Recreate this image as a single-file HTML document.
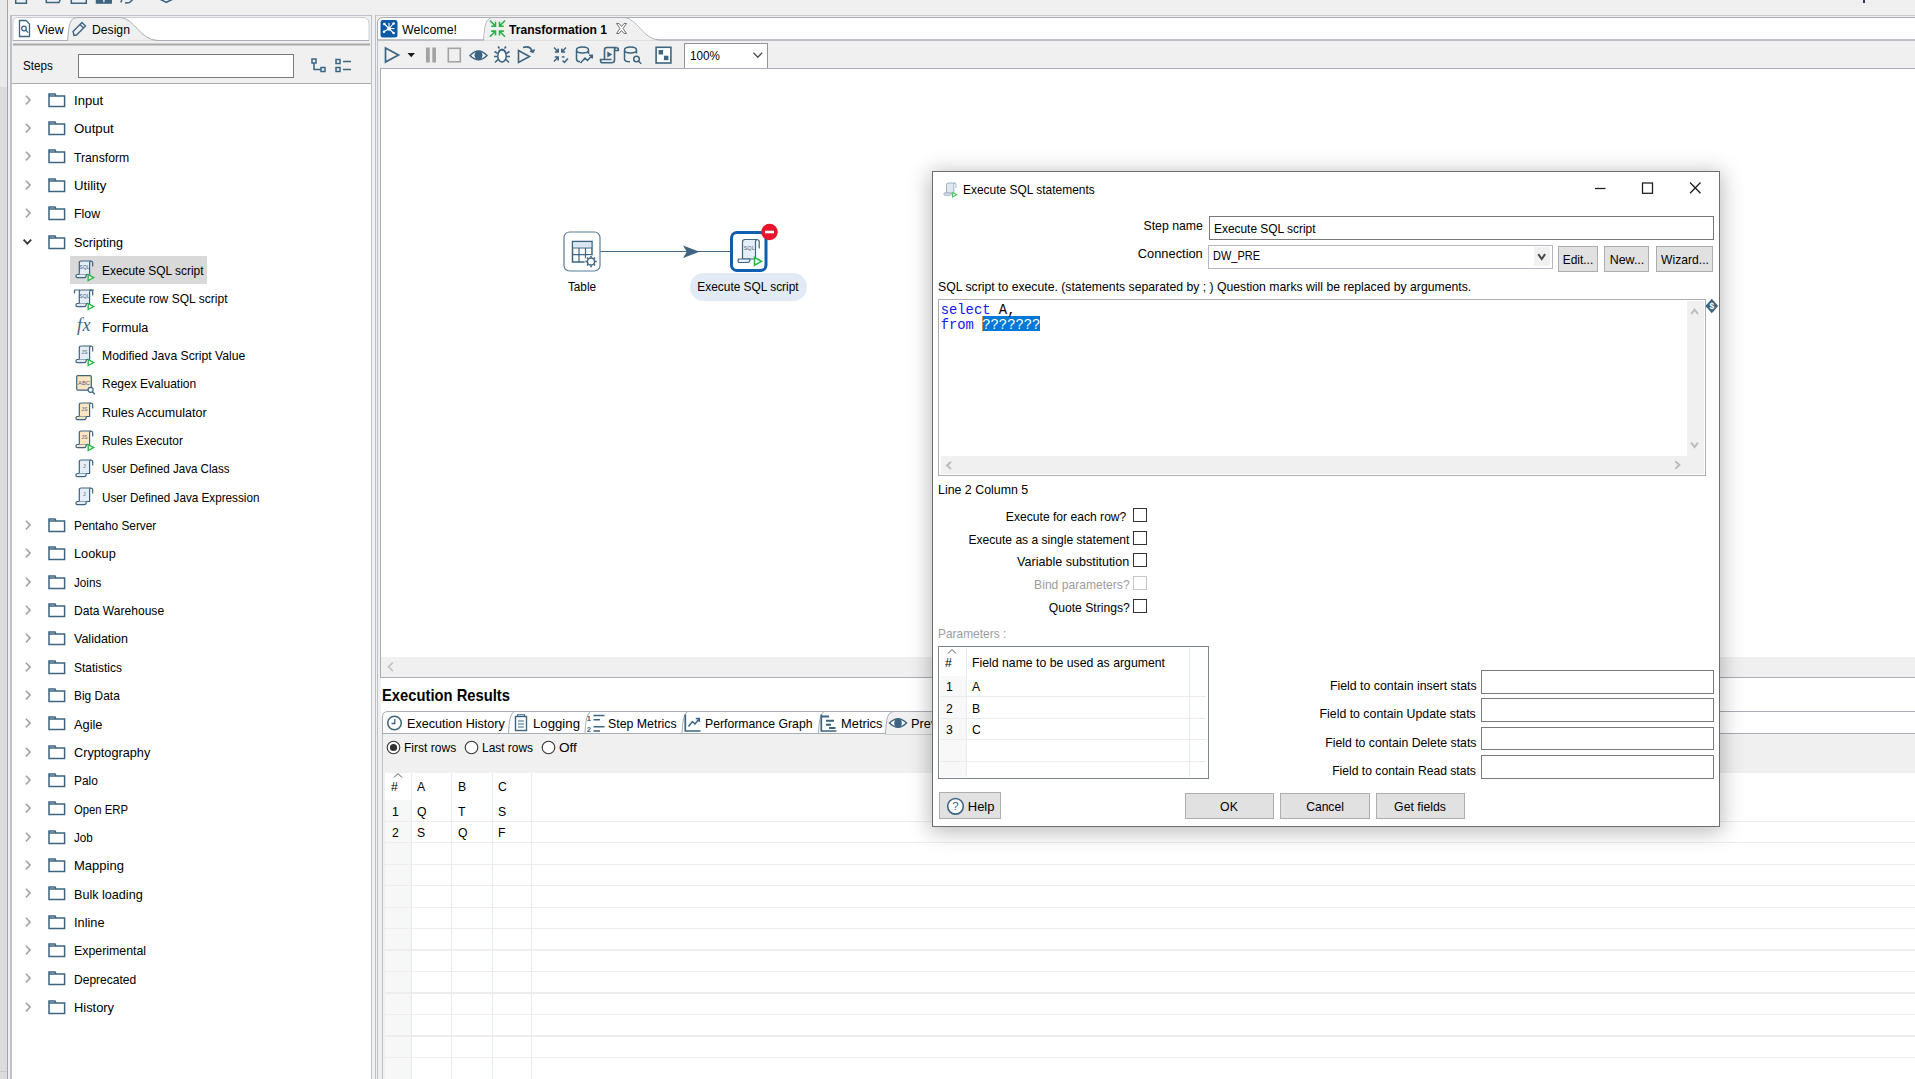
<!DOCTYPE html>
<html lang="en"><head><meta charset="utf-8"><title>Spoon - Transformation 1</title><style>
html,body{margin:0;padding:0}
body{width:1915px;height:1079px;overflow:hidden;background:#f0f0f0;position:relative;font-family:"Liberation Sans",sans-serif;color:#000}
div,span,svg{position:absolute;display:block}
svg{overflow:visible}
.t{white-space:nowrap;font-size:13px;line-height:16px;transform-origin:0 0;color:#000}
.t.r{transform-origin:100% 0}
.t.c{transform-origin:50% 0;text-align:center}
.t.b{font-weight:bold}
.t.g{color:#9d9d9d}
.mono{font-family:"Liberation Mono",monospace}
</style></head>
<body>
<div style="left:0px;top:0px;width:7px;height:87.3px;background:#e9e9e9"></div>
<div style="left:0px;top:87.3px;width:7px;height:992px;background:#dcdcdc"></div>
<div style="left:7px;top:0px;width:1.3px;height:1079px;background:#a4a4a4"></div>
<div style="left:0px;top:1071px;width:7px;height:1px;background:#c8c8c8"></div>
<svg style="left:0px;top:0px;" width="180" height="6" viewBox="0 0 180 6"><g fill="none" stroke="#3d6480" stroke-width="1.500"><path d="M15.700 -3V3.200H26.400V-3"/><path d="M46.300 -3V2.600H59L61.200 -3"/><path d="M71.300 -3V3.200H86.300V-3"/><path d="M96.500 -3V3.100H111.200V-3" fill="#3d6480"/><path d="M120.800 2.500L122.500 -2M125 3L129.500 2.600L134.800 -2.500"/><path d="M159.500 -1L166.300 2.300L173.200 -1"/></g><rect x="103.200" y="0" width="1.400" height="2.200" fill="#f0f0f0"/></svg>
<div style="left:1863px;top:0px;width:2px;height:3px;background:#33335a"></div>
<div style="left:10.3px;top:15px;width:361.5px;height:1px;background:#bcc0c8"></div>
<div style="left:10.3px;top:15px;width:1.3px;height:1064px;background:#bcc0c8"></div>
<div style="left:370.6px;top:15px;width:1.3px;height:1064px;background:#bcc0c8"></div>
<svg style="left:12px;top:16px;" width="359" height="30" viewBox="0 0 359 30"><path d="M1 24.5V6.5Q1 1.5 6 1.5H351Q357 1.5 357 7.5V24.5Z" fill="#fff" stroke="#c9ccd2"/><path d="M55.5 24.5C57 10 57 1.5 66 1.5H108C122 1.5 128 24.5 146 24.5" fill="#f0f0f0" stroke="#a9adb5"/><path d="M1 24.5H55.5M146 24.5H357" stroke="#a9adb5" fill="none"/><rect x="1" y="27.5" width="357" height="2" fill="#a8a8a8"/><g fill="none" stroke="#3d6480" stroke-width="1.3"><path d="M7.5 4.5H14L17.5 8V20.5H7.5Z"/><circle cx="12" cy="12.5" r="2.3"/><path d="M13.8 14.3L16 16.6"/></g><g fill="none" stroke="#3d6480" stroke-width="1.4"><path d="M62 19.5L61 15.5L70 6.5L73.5 10L64.5 19Z M68 8.5L71.5 12"/></g></svg>
<span class="t" style="left:37.0px;top:21.5px;transform:scaleX(0.9516);">View</span>
<span class="t" style="left:92.0px;top:21.5px;transform:scaleX(0.9365);">Design</span>
<span class="t" style="left:22.6px;top:57.5px;transform:scaleX(0.8962);">Steps</span>
<div style="left:78px;top:54px;width:214px;height:22px;background:#fff;border:1px solid #7a7a7a;box-sizing:content-box"></div>
<svg style="left:310px;top:57px;" width="44" height="18" viewBox="0 0 44 18"><g fill="none" stroke="#3d6480" stroke-width="1.5"><rect x="2" y="2" width="4" height="4"/><rect x="11" y="10.5" width="4" height="4"/><path d="M4 6V12.5H11"/><rect x="26" y="2.5" width="4" height="4"/><rect x="26" y="10.5" width="4" height="4"/><path d="M33 4.5H41M33 12.5H41"/></g></svg>
<div style="left:12px;top:83.3px;width:359px;height:1.3px;background:#adadad"></div>
<div style="left:12px;top:84px;width:359px;height:995px;background:#fff"></div>
<svg style="left:22.6px;top:93.8px;" width="10" height="12" viewBox="0 0 10 12"><path d="M2.900 1.800L7.100 6.100L2.900 10.400" fill="none" stroke="#a3a3a3" stroke-width="1.600"/></svg>
<svg style="left:47.5px;top:91.8px;" width="18" height="16" viewBox="0 0 18 16"><path d="M1 1.900H7L8 4H16.600V14.600H1Z M1 4H8" fill="none" stroke="#3d6480" stroke-width="1.5"/></svg>
<span class="t" style="left:74.1px;top:92.5px;transform:scaleX(1.0062);">Input</span>
<svg style="left:22.6px;top:122.14px;" width="10" height="12" viewBox="0 0 10 12"><path d="M2.900 1.800L7.100 6.100L2.900 10.400" fill="none" stroke="#a3a3a3" stroke-width="1.600"/></svg>
<svg style="left:47.5px;top:120.14px;" width="18" height="16" viewBox="0 0 18 16"><path d="M1 1.900H7L8 4H16.600V14.600H1Z M1 4H8" fill="none" stroke="#3d6480" stroke-width="1.5"/></svg>
<span class="t" style="left:74.1px;top:120.5px;transform:scaleX(1.0197);">Output</span>
<svg style="left:22.6px;top:150.49px;" width="10" height="12" viewBox="0 0 10 12"><path d="M2.900 1.800L7.100 6.100L2.900 10.400" fill="none" stroke="#a3a3a3" stroke-width="1.600"/></svg>
<svg style="left:47.5px;top:148.49px;" width="18" height="16" viewBox="0 0 18 16"><path d="M1 1.900H7L8 4H16.600V14.600H1Z M1 4H8" fill="none" stroke="#3d6480" stroke-width="1.5"/></svg>
<span class="t" style="left:74.1px;top:149.5px;transform:scaleX(0.9396);">Transform</span>
<svg style="left:22.6px;top:178.83px;" width="10" height="12" viewBox="0 0 10 12"><path d="M2.900 1.800L7.100 6.100L2.900 10.400" fill="none" stroke="#a3a3a3" stroke-width="1.600"/></svg>
<svg style="left:47.5px;top:176.83px;" width="18" height="16" viewBox="0 0 18 16"><path d="M1 1.900H7L8 4H16.600V14.600H1Z M1 4H8" fill="none" stroke="#3d6480" stroke-width="1.5"/></svg>
<span class="t" style="left:74.1px;top:177.5px;transform:scaleX(1.0163);">Utility</span>
<svg style="left:22.6px;top:207.18px;" width="10" height="12" viewBox="0 0 10 12"><path d="M2.900 1.800L7.100 6.100L2.900 10.400" fill="none" stroke="#a3a3a3" stroke-width="1.600"/></svg>
<svg style="left:47.5px;top:205.18px;" width="18" height="16" viewBox="0 0 18 16"><path d="M1 1.900H7L8 4H16.600V14.600H1Z M1 4H8" fill="none" stroke="#3d6480" stroke-width="1.5"/></svg>
<span class="t" style="left:74.1px;top:205.5px;transform:scaleX(0.9544);">Flow</span>
<svg style="left:21px;top:236.52px;" width="14" height="10" viewBox="0 0 14 10"><path d="M2.600 2.700L6.400 6.600L10.200 2.700" fill="none" stroke="#3a3a3a" stroke-width="1.900"/></svg>
<svg style="left:47.5px;top:233.52px;" width="18" height="16" viewBox="0 0 18 16"><path d="M1 1.900H7L8 4H16.600V14.600H1Z M1 4H8" fill="none" stroke="#3d6480" stroke-width="1.5"/></svg>
<span class="t" style="left:74.1px;top:234.5px;transform:scaleX(0.9688);">Scripting</span>
<div style="left:70px;top:256.06px;width:137px;height:27.7px;background:#d9d9d9"></div>
<svg style="left:75px;top:259.36px;" width="21" height="23" viewBox="0 0 21 23"><path d="M4.300 15.500V4Q4.300 2 6.300 2H16Q14.600 2.300 14.600 4V15.500Z" fill="#e4ecf5" stroke="#3d6480" stroke-width="1.200"/><path d="M15.500 2Q17.900 2 17.700 4.500V7.600" fill="none" stroke="#3d6480" stroke-width="1.200"/><path d="M4.300 15.500H2.300Q0.900 15.600 0.900 17Q0.900 18.600 2.500 18.600H9.500Q11.300 18.600 11.300 15.500" fill="#e4ecf5" stroke="#3d6480" stroke-width="1.200"/><text x="9.400" y="10.300" text-anchor="middle" font-size="5.200" font-family="Liberation Sans,sans-serif" fill="#3d6480">SQL</text><path d="M13.200 15.700L18.600 18.600L13.200 21.600Z" fill="#fff" stroke="#2db84a" stroke-width="1.400"/></svg>
<span class="t" style="left:101.8px;top:262.5px;transform:scaleX(0.9161);">Execute SQL script</span>
<svg style="left:75px;top:287.71px;" width="21" height="23" viewBox="0 0 21 23"><path d="M4.300 15.500V4Q4.300 2 6.300 2H16Q14.600 2.300 14.600 4V15.500Z" fill="#e4ecf5" stroke="#3d6480" stroke-width="1.200"/><path d="M15.500 2Q17.900 2 17.700 4.500V7.600" fill="none" stroke="#3d6480" stroke-width="1.200"/><path d="M4.300 15.500H2.300Q0.900 15.600 0.900 17Q0.900 18.600 2.500 18.600H9.500Q11.300 18.600 11.300 15.500" fill="#e4ecf5" stroke="#3d6480" stroke-width="1.200"/><text x="9.400" y="10.300" text-anchor="middle" font-size="5.200" font-family="Liberation Sans,sans-serif" fill="#3d6480">SQL</text><path d="M13.200 15.700L18.600 18.600L13.200 21.600Z" fill="#fff" stroke="#2db84a" stroke-width="1.400"/><path d="M-0.500 2H5M-0.500 2V5.500M15 2H19" stroke="#3d6480" stroke-width="1.200" fill="none"/></svg>
<span class="t" style="left:101.8px;top:290.5px;transform:scaleX(0.9272);">Execute row SQL script</span>
<span class="t" style="left:77px;top:316.05px;font:italic 18px 'Liberation Serif',serif;color:#3d6480;transform:none;line-height:18px;letter-spacing:.5px">fx</span>
<span class="t" style="left:101.8px;top:319.5px;transform:scaleX(0.9709);">Formula</span>
<svg style="left:75px;top:344.4px;" width="21" height="23" viewBox="0 0 21 23"><path d="M4.300 15.500V4Q4.300 2 6.300 2H16Q14.600 2.300 14.600 4V15.500Z" fill="#e4ecf5" stroke="#3d6480" stroke-width="1.200"/><path d="M15.500 2Q17.900 2 17.700 4.500V7.600" fill="none" stroke="#3d6480" stroke-width="1.200"/><path d="M4.300 15.500H2.300Q0.900 15.600 0.900 17Q0.900 18.600 2.500 18.600H9.500Q11.300 18.600 11.300 15.500" fill="#e4ecf5" stroke="#3d6480" stroke-width="1.200"/><text x="9.400" y="10.300" text-anchor="middle" font-size="5.200" font-family="Liberation Sans,sans-serif" fill="#3d6480">JS</text><path d="M13.200 15.700L18.600 18.600L13.200 21.600Z" fill="#fff" stroke="#2db84a" stroke-width="1.400"/></svg>
<span class="t" style="left:101.8px;top:347.5px;transform:scaleX(0.9375);">Modified Java Script Value</span>
<svg style="left:75px;top:373.74px;" width="22" height="22" viewBox="0 0 22 22"><rect x="1.700" y="1.600" width="14.600" height="14.600" rx="1.200" fill="#fbe6c4" stroke="#3d6480" stroke-width="1.200"/><text x="9" y="11" text-anchor="middle" font-size="5.800" font-family="Liberation Sans,sans-serif" fill="#3d6480">ABC</text><circle cx="15.600" cy="15.800" r="2.500" fill="#fff" stroke="#3d6480" stroke-width="1.200"/><path d="M17.400 17.700L19.800 20.200" stroke="#3d6480" stroke-width="1.300"/></svg>
<span class="t" style="left:101.8px;top:375.5px;transform:scaleX(0.9244);">Regex Evaluation</span>
<svg style="left:75px;top:401.08px;" width="21" height="23" viewBox="0 0 21 23"><path d="M4.300 15.500V4Q4.300 2 6.300 2H16Q14.600 2.300 14.600 4V15.500Z" fill="#fbe6c4" stroke="#3d6480" stroke-width="1.200"/><path d="M15.500 2Q17.900 2 17.700 4.500V7.600" fill="none" stroke="#3d6480" stroke-width="1.200"/><path d="M4.300 15.500H2.300Q0.900 15.600 0.900 17Q0.900 18.600 2.500 18.600H9.500Q11.300 18.600 11.300 15.500" fill="#fbe6c4" stroke="#3d6480" stroke-width="1.200"/><text x="9.400" y="10.300" text-anchor="middle" font-size="5.200" font-family="Liberation Sans,sans-serif" fill="#3d6480">JS</text></svg>
<span class="t" style="left:101.8px;top:404.5px;transform:scaleX(0.965);">Rules Accumulator</span>
<svg style="left:75px;top:429.43px;" width="21" height="23" viewBox="0 0 21 23"><path d="M4.300 15.500V4Q4.300 2 6.300 2H16Q14.600 2.300 14.600 4V15.500Z" fill="#fbe6c4" stroke="#3d6480" stroke-width="1.200"/><path d="M15.500 2Q17.900 2 17.700 4.500V7.600" fill="none" stroke="#3d6480" stroke-width="1.200"/><path d="M4.300 15.500H2.300Q0.900 15.600 0.900 17Q0.900 18.600 2.500 18.600H9.500Q11.300 18.600 11.300 15.500" fill="#fbe6c4" stroke="#3d6480" stroke-width="1.200"/><text x="9.400" y="10.300" text-anchor="middle" font-size="5.200" font-family="Liberation Sans,sans-serif" fill="#3d6480">JS</text><path d="M13.200 15.700L18.600 18.600L13.200 21.600Z" fill="#fff" stroke="#2db84a" stroke-width="1.400"/></svg>
<span class="t" style="left:101.8px;top:432.5px;transform:scaleX(0.9177);">Rules Executor</span>
<svg style="left:75px;top:457.77px;" width="21" height="23" viewBox="0 0 21 23"><path d="M4.300 15.500V4Q4.300 2 6.300 2H16Q14.600 2.300 14.600 4V15.500Z" fill="#e4ecf5" stroke="#3d6480" stroke-width="1.200"/><path d="M15.500 2Q17.900 2 17.700 4.500V7.600" fill="none" stroke="#3d6480" stroke-width="1.200"/><path d="M4.300 15.500H2.300Q0.900 15.600 0.900 17Q0.900 18.600 2.500 18.600H9.500Q11.300 18.600 11.300 15.500" fill="#e4ecf5" stroke="#3d6480" stroke-width="1.200"/><text x="9.400" y="10.300" text-anchor="middle" font-size="5.200" font-family="Liberation Sans,sans-serif" fill="#3d6480">J</text></svg>
<span class="t" style="left:101.8px;top:460.5px;transform:scaleX(0.8919);">User Defined Java Class</span>
<svg style="left:75px;top:486.12px;" width="21" height="23" viewBox="0 0 21 23"><path d="M4.300 15.500V4Q4.300 2 6.300 2H16Q14.600 2.300 14.600 4V15.500Z" fill="#e4ecf5" stroke="#3d6480" stroke-width="1.200"/><path d="M15.500 2Q17.900 2 17.700 4.500V7.600" fill="none" stroke="#3d6480" stroke-width="1.200"/><path d="M4.300 15.500H2.300Q0.900 15.600 0.900 17Q0.900 18.600 2.500 18.600H9.500Q11.300 18.600 11.300 15.500" fill="#e4ecf5" stroke="#3d6480" stroke-width="1.200"/><text x="9.400" y="10.300" text-anchor="middle" font-size="5.200" font-family="Liberation Sans,sans-serif" fill="#3d6480">J</text></svg>
<span class="t" style="left:101.8px;top:489.5px;transform:scaleX(0.9002);">User Defined Java Expression</span>
<svg style="left:22.6px;top:518.96px;" width="10" height="12" viewBox="0 0 10 12"><path d="M2.900 1.800L7.100 6.100L2.900 10.400" fill="none" stroke="#a3a3a3" stroke-width="1.600"/></svg>
<svg style="left:47.5px;top:516.96px;" width="18" height="16" viewBox="0 0 18 16"><path d="M1 1.900H7L8 4H16.600V14.600H1Z M1 4H8" fill="none" stroke="#3d6480" stroke-width="1.5"/></svg>
<span class="t" style="left:74.1px;top:517.5px;transform:scaleX(0.911);">Pentaho Server</span>
<svg style="left:22.6px;top:547.3px;" width="10" height="12" viewBox="0 0 10 12"><path d="M2.900 1.800L7.100 6.100L2.900 10.400" fill="none" stroke="#a3a3a3" stroke-width="1.600"/></svg>
<svg style="left:47.5px;top:545.3px;" width="18" height="16" viewBox="0 0 18 16"><path d="M1 1.900H7L8 4H16.600V14.600H1Z M1 4H8" fill="none" stroke="#3d6480" stroke-width="1.5"/></svg>
<span class="t" style="left:74.1px;top:545.5px;transform:scaleX(0.9776);">Lookup</span>
<svg style="left:22.6px;top:575.65px;" width="10" height="12" viewBox="0 0 10 12"><path d="M2.900 1.800L7.100 6.100L2.900 10.400" fill="none" stroke="#a3a3a3" stroke-width="1.600"/></svg>
<svg style="left:47.5px;top:573.65px;" width="18" height="16" viewBox="0 0 18 16"><path d="M1 1.900H7L8 4H16.600V14.600H1Z M1 4H8" fill="none" stroke="#3d6480" stroke-width="1.5"/></svg>
<span class="t" style="left:74.1px;top:574.5px;transform:scaleX(0.8992);">Joins</span>
<svg style="left:22.6px;top:603.99px;" width="10" height="12" viewBox="0 0 10 12"><path d="M2.900 1.800L7.100 6.100L2.900 10.400" fill="none" stroke="#a3a3a3" stroke-width="1.600"/></svg>
<svg style="left:47.5px;top:601.99px;" width="18" height="16" viewBox="0 0 18 16"><path d="M1 1.900H7L8 4H16.600V14.600H1Z M1 4H8" fill="none" stroke="#3d6480" stroke-width="1.5"/></svg>
<span class="t" style="left:74.1px;top:602.5px;transform:scaleX(0.9281);">Data Warehouse</span>
<svg style="left:22.6px;top:632.34px;" width="10" height="12" viewBox="0 0 10 12"><path d="M2.900 1.800L7.100 6.100L2.900 10.400" fill="none" stroke="#a3a3a3" stroke-width="1.600"/></svg>
<svg style="left:47.5px;top:630.34px;" width="18" height="16" viewBox="0 0 18 16"><path d="M1 1.900H7L8 4H16.600V14.600H1Z M1 4H8" fill="none" stroke="#3d6480" stroke-width="1.5"/></svg>
<span class="t" style="left:74.1px;top:630.5px;transform:scaleX(0.9619);">Validation</span>
<svg style="left:22.6px;top:660.68px;" width="10" height="12" viewBox="0 0 10 12"><path d="M2.900 1.800L7.100 6.100L2.900 10.400" fill="none" stroke="#a3a3a3" stroke-width="1.600"/></svg>
<svg style="left:47.5px;top:658.68px;" width="18" height="16" viewBox="0 0 18 16"><path d="M1 1.900H7L8 4H16.600V14.600H1Z M1 4H8" fill="none" stroke="#3d6480" stroke-width="1.5"/></svg>
<span class="t" style="left:74.1px;top:659.5px;transform:scaleX(0.9209);">Statistics</span>
<svg style="left:22.6px;top:689.02px;" width="10" height="12" viewBox="0 0 10 12"><path d="M2.900 1.800L7.100 6.100L2.900 10.400" fill="none" stroke="#a3a3a3" stroke-width="1.600"/></svg>
<svg style="left:47.5px;top:687.02px;" width="18" height="16" viewBox="0 0 18 16"><path d="M1 1.900H7L8 4H16.600V14.600H1Z M1 4H8" fill="none" stroke="#3d6480" stroke-width="1.5"/></svg>
<span class="t" style="left:74.1px;top:687.5px;transform:scaleX(0.9183);">Big Data</span>
<svg style="left:22.6px;top:717.37px;" width="10" height="12" viewBox="0 0 10 12"><path d="M2.900 1.800L7.100 6.100L2.900 10.400" fill="none" stroke="#a3a3a3" stroke-width="1.600"/></svg>
<svg style="left:47.5px;top:715.37px;" width="18" height="16" viewBox="0 0 18 16"><path d="M1 1.900H7L8 4H16.600V14.600H1Z M1 4H8" fill="none" stroke="#3d6480" stroke-width="1.5"/></svg>
<span class="t" style="left:74.1px;top:716.5px;transform:scaleX(0.9854);">Agile</span>
<svg style="left:22.6px;top:745.71px;" width="10" height="12" viewBox="0 0 10 12"><path d="M2.900 1.800L7.100 6.100L2.900 10.400" fill="none" stroke="#a3a3a3" stroke-width="1.600"/></svg>
<svg style="left:47.5px;top:743.71px;" width="18" height="16" viewBox="0 0 18 16"><path d="M1 1.900H7L8 4H16.600V14.600H1Z M1 4H8" fill="none" stroke="#3d6480" stroke-width="1.5"/></svg>
<span class="t" style="left:74.1px;top:744.5px;transform:scaleX(0.9776);">Cryptography</span>
<svg style="left:22.6px;top:774.06px;" width="10" height="12" viewBox="0 0 10 12"><path d="M2.900 1.800L7.100 6.100L2.900 10.400" fill="none" stroke="#a3a3a3" stroke-width="1.600"/></svg>
<svg style="left:47.5px;top:772.06px;" width="18" height="16" viewBox="0 0 18 16"><path d="M1 1.900H7L8 4H16.600V14.600H1Z M1 4H8" fill="none" stroke="#3d6480" stroke-width="1.5"/></svg>
<span class="t" style="left:74.1px;top:772.5px;transform:scaleX(0.9181);">Palo</span>
<svg style="left:22.6px;top:802.4px;" width="10" height="12" viewBox="0 0 10 12"><path d="M2.900 1.800L7.100 6.100L2.900 10.400" fill="none" stroke="#a3a3a3" stroke-width="1.600"/></svg>
<svg style="left:47.5px;top:800.4px;" width="18" height="16" viewBox="0 0 18 16"><path d="M1 1.900H7L8 4H16.600V14.600H1Z M1 4H8" fill="none" stroke="#3d6480" stroke-width="1.5"/></svg>
<span class="t" style="left:74.1px;top:801.5px;transform:scaleX(0.8688);">Open ERP</span>
<svg style="left:22.6px;top:830.74px;" width="10" height="12" viewBox="0 0 10 12"><path d="M2.900 1.800L7.100 6.100L2.900 10.400" fill="none" stroke="#a3a3a3" stroke-width="1.600"/></svg>
<svg style="left:47.5px;top:828.74px;" width="18" height="16" viewBox="0 0 18 16"><path d="M1 1.900H7L8 4H16.600V14.600H1Z M1 4H8" fill="none" stroke="#3d6480" stroke-width="1.5"/></svg>
<span class="t" style="left:74.1px;top:829.5px;transform:scaleX(0.8966);">Job</span>
<svg style="left:22.6px;top:859.09px;" width="10" height="12" viewBox="0 0 10 12"><path d="M2.900 1.800L7.100 6.100L2.900 10.400" fill="none" stroke="#a3a3a3" stroke-width="1.600"/></svg>
<svg style="left:47.5px;top:857.09px;" width="18" height="16" viewBox="0 0 18 16"><path d="M1 1.900H7L8 4H16.600V14.600H1Z M1 4H8" fill="none" stroke="#3d6480" stroke-width="1.5"/></svg>
<span class="t" style="left:74.1px;top:857.5px;transform:scaleX(1.0005);">Mapping</span>
<svg style="left:22.6px;top:887.43px;" width="10" height="12" viewBox="0 0 10 12"><path d="M2.900 1.800L7.100 6.100L2.900 10.400" fill="none" stroke="#a3a3a3" stroke-width="1.600"/></svg>
<svg style="left:47.5px;top:885.43px;" width="18" height="16" viewBox="0 0 18 16"><path d="M1 1.900H7L8 4H16.600V14.600H1Z M1 4H8" fill="none" stroke="#3d6480" stroke-width="1.5"/></svg>
<span class="t" style="left:74.1px;top:886.5px;transform:scaleX(0.97);">Bulk loading</span>
<svg style="left:22.6px;top:915.78px;" width="10" height="12" viewBox="0 0 10 12"><path d="M2.900 1.800L7.100 6.100L2.900 10.400" fill="none" stroke="#a3a3a3" stroke-width="1.600"/></svg>
<svg style="left:47.5px;top:913.78px;" width="18" height="16" viewBox="0 0 18 16"><path d="M1 1.900H7L8 4H16.600V14.600H1Z M1 4H8" fill="none" stroke="#3d6480" stroke-width="1.5"/></svg>
<span class="t" style="left:74.1px;top:914.5px;transform:scaleX(0.9846);">Inline</span>
<svg style="left:22.6px;top:944.12px;" width="10" height="12" viewBox="0 0 10 12"><path d="M2.900 1.800L7.100 6.100L2.900 10.400" fill="none" stroke="#a3a3a3" stroke-width="1.600"/></svg>
<svg style="left:47.5px;top:942.12px;" width="18" height="16" viewBox="0 0 18 16"><path d="M1 1.900H7L8 4H16.600V14.600H1Z M1 4H8" fill="none" stroke="#3d6480" stroke-width="1.5"/></svg>
<span class="t" style="left:74.1px;top:942.5px;transform:scaleX(0.9502);">Experimental</span>
<svg style="left:22.6px;top:972.46px;" width="10" height="12" viewBox="0 0 10 12"><path d="M2.900 1.800L7.100 6.100L2.900 10.400" fill="none" stroke="#a3a3a3" stroke-width="1.600"/></svg>
<svg style="left:47.5px;top:970.46px;" width="18" height="16" viewBox="0 0 18 16"><path d="M1 1.900H7L8 4H16.600V14.600H1Z M1 4H8" fill="none" stroke="#3d6480" stroke-width="1.5"/></svg>
<span class="t" style="left:74.1px;top:971.5px;transform:scaleX(0.9253);">Deprecated</span>
<svg style="left:22.6px;top:1000.81px;" width="10" height="12" viewBox="0 0 10 12"><path d="M2.900 1.800L7.100 6.100L2.900 10.400" fill="none" stroke="#a3a3a3" stroke-width="1.600"/></svg>
<svg style="left:47.5px;top:998.81px;" width="18" height="16" viewBox="0 0 18 16"><path d="M1 1.900H7L8 4H16.600V14.600H1Z M1 4H8" fill="none" stroke="#3d6480" stroke-width="1.5"/></svg>
<span class="t" style="left:74.1px;top:999.5px;transform:scaleX(0.9888);">History</span>
<div style="left:375px;top:15px;width:1540px;height:1px;background:#c6c8cd"></div>
<div style="left:375px;top:15px;width:1px;height:1064px;background:#bcc0c8"></div>
<svg style="left:376px;top:16px;" width="1539" height="26" viewBox="0 0 1539 26"><path d="M1.5 24V7Q1.5 1.5 7 1.5H1545V24Z" fill="#fff" stroke="#a9adb5"/><path d="M107.5 24C109 10 109 1.5 118 1.5H247C262 1.5 266 24 284 24H1545" fill="none" stroke="#a9adb5"/><path d="M108 24.5C109.5 10 109.5 2 118 2H247C261.5 2 266 24.5 284 24.5H108Z" fill="#f0f0f0"/><path d="M1.5 24H107.5" stroke="#a9adb5"/><rect x="4.5" y="4" width="17" height="17.5" rx="2.5" fill="#0c5aa6"/><g stroke="#fff" stroke-width="1.1"><path d="M13 12.7L8.5 8M13 12.7L17.5 7.5M13 12.7L8 15.5M13 12.7L17.5 17M13 12.7L13 7M13 12.7L18.5 12.5"/></g><g fill="#fff"><circle cx="13" cy="12.7" r="2"/><circle cx="8.3" cy="8" r="1.3"/><circle cx="17.6" cy="7.5" r="1.3"/><circle cx="8" cy="15.7" r="1.3"/><circle cx="17.6" cy="17" r="1.3"/></g><g stroke="#27b043" stroke-width="1.6" fill="none"><path d="M114 4.5L119.3 10M119.5 5.8V10.2H115.2"/><path d="M129 4.5L123.7 10M123.5 5.8V10.2H127.8"/><path d="M114 20.8L119.3 15.3M119.5 19.5V15.1H115.2"/><path d="M129 20.8L123.7 15.3M123.5 19.5V15.1H127.8"/></g><path d="M240.5 7.5L243 7.5L245.5 10.5L248 7.5L250.5 7.5L247 12.5L250.5 17.5L248 17.5L245.5 14.5L243 17.5L240.5 17.5L244 12.5Z" fill="#fff" stroke="#707070" stroke-width="1"/></svg>
<span class="t" style="left:401.5px;top:21.5px;transform:scaleX(0.9555);">Welcome!</span>
<span class="t b" style="left:508.5px;top:21.5px;transform:scaleX(0.9292);">Transformation 1</span>
<div style="left:377px;top:40px;width:1px;height:1039px;background:#bcc0c8"></div>
<div style="left:380px;top:68px;width:1535px;height:1px;background:#a9adb5"></div>
<div style="left:380px;top:68px;width:1px;height:610px;background:#a9adb5"></div>
<svg style="left:380px;top:42px;" width="400" height="26" viewBox="0 0 400 26"><g fill="none" stroke="#3d6480" stroke-width="1.7"><path d="M5.5 6L18.5 13L5.5 20Z"/></g><path d="M27.5 11H35L31.2 15.3Z" fill="#1a1a1a"/><path d="M46 5.5H49.8V20.5H46ZM52.3 5.5H56V20.5H52.3Z" fill="#a3a3a3"/><rect x="68.3" y="6.3" width="12" height="13.5" fill="none" stroke="#a3a3a3" stroke-width="1.6"/><path d="M90 13.5Q98.5 4.5 107 13.5Q98.5 22 90 13.5Z" fill="#fff" stroke="#3d6480" stroke-width="1.5"/><ellipse cx="98.5" cy="13.3" rx="4" ry="4.6" fill="#3d6480"/><g stroke="#3d6480" stroke-width="1.5" fill="none"><ellipse cx="122" cy="14" rx="4.2" ry="6" fill="#fff"/><path d="M118.5 9.5Q122 5 125.500 9.500M119.500 6.500L118 4.500M124.500 6.500L126 4.500M117.800 11.500L114.500 9.500M117.700 14.500H114M118 17.500L115 20.500M126.200 11.500L129.500 9.500M126.300 14.500H130M126 17.500L129 20.500"/></g><g stroke="#3d6480" stroke-width="1.6" fill="none"><path d="M138.500 8.500L149.500 14.500L138.500 20.500Z"/><path d="M143 5.500Q150 3 152.500 9.500M150 9L152.800 10.200L154.500 7.500"/></g><g stroke="#3d6480" stroke-width="1.5" fill="none"><path d="M174 5.500L178 9.800M178.200 6.500V10H174.800M186 5.500L182 9.800M181.800 6.500V10H185.200M174 19.500L178 15.200M178.200 18.500V15H174.800M181.800 15H184.500"/><path d="M182.500 18.500L184.500 20.500L188 16.500"/></g><g stroke="#3d6480" stroke-width="1.5" fill="none"><path d="M196.500 8Q196.500 5 202.500 5Q208.500 5 208.500 8V12M196.500 8V17Q196.500 19.500 200 19.800M196.500 8Q196.500 11 202.500 11Q208.500 11 208.500 8"/><path d="M200.500 21L205 16L207.500 18.500L212 13.500M209 13.200H212.300V16.500"/></g><g stroke="#3d6480" stroke-width="1.6" fill="none"><path d="M224.500 17.500V8Q224.500 5.500 227 5.500H236.500Q234.500 5.500 234.500 8V18Q234.500 20.800 231.500 20.800H222.500Q220.300 20.800 220.500 17.500H231.500"/><path d="M236.500 5.500Q238.700 6 238.300 8.500H234.500"/></g><path d="M227.300 9.500L232.200 12.500L227.300 15.500Z" fill="#3d6480"/><g stroke="#3d6480" stroke-width="1.5" fill="none"><path d="M244.500 8Q244.500 5 250.500 5Q256.500 5 256.500 8V11.500M244.500 8V17Q244.500 19.800 250 19.800M244.500 8Q244.500 11 250.500 11Q256.500 11 256.500 8"/><circle cx="256.500" cy="17" r="2.800"/><path d="M258.600 19.200L261.300 21.800"/></g><rect x="276.100" y="5.300" width="14.800" height="15.700" fill="#fff" stroke="#3d6480" stroke-width="1.6"/><rect x="278.600" y="8" width="4.500" height="4.500" fill="#3d6480"/><rect x="283.900" y="13.700" width="4.500" height="4.500" fill="#3d6480"/></svg>
<div style="left:684px;top:43px;width:83.6px;height:25px;background:#fff;border:1.3px solid #959595;border-bottom:none;box-sizing:border-box"></div>
<span class="t" style="left:690.1px;top:47.5px;transform:scaleX(0.8962);">100%</span>
<svg style="left:752px;top:51px;" width="12" height="9" viewBox="0 0 12 9"><path d="M1.500 1.800L5.800 6.300L10.100 1.800" fill="none" stroke="#505050" stroke-width="1.3"/></svg>
<div style="left:381px;top:69px;width:1534px;height:588px;background:#fff"></div>
<div style="left:381px;top:657px;width:1534px;height:20px;background:#f0f0f0"></div>
<svg style="left:386px;top:661px;" width="10" height="12" viewBox="0 0 10 12"><path d="M6.800 1.500L2.500 5.800L6.800 10.100" fill="none" stroke="#c3c3c3" stroke-width="1.700"/></svg>
<div style="left:380px;top:677px;width:1535px;height:1px;background:#a9adb5"></div>
<div style="left:600px;top:250.7px;width:131px;height:1.8px;background:#456983"></div>
<svg style="left:682px;top:244px;" width="20" height="16" viewBox="0 0 20 16"><path d="M1 1.500L17.500 7.700L1 14L4.800 7.700Z" fill="#3d6480"/></svg>
<svg style="left:563px;top:231px;" width="40" height="42" viewBox="0 0 40 42"><rect x="1" y="1" width="36" height="39" rx="5.500" fill="#fff" stroke="#5b7d98" stroke-width="1.200"/><rect x="9.500" y="10.500" width="19.500" height="20.500" fill="#fff" stroke="#3d6480" stroke-width="1.500"/><rect x="10.300" y="11.300" width="18" height="5" fill="#dbe6f2"/><path d="M9.500 17H29M9.500 23.700H29M16 17V31M22.500 17V31" stroke="#3d6480" stroke-width="1.200" fill="none"/><circle cx="28" cy="30.500" r="6.500" fill="#fff"/><circle cx="28" cy="30.500" r="3.600" fill="#fff" stroke="#3d6480" stroke-width="1.500"/><g stroke="#3d6480" stroke-width="1.600"><path d="M28 24.800V26.500M28 34.500V36.200M22.300 30.500H24M32 30.500H33.700M24 26.500L25.200 27.700M30.800 33.300L32 34.500M24 34.500L25.200 33.300M30.800 27.700L32 26.500"/></g></svg>
<span class="t c" style="left:381.5px;width:400px;top:278.5px;transform:scaleX(0.9074);">Table</span>
<div style="left:689.5px;top:273px;width:117px;height:28px;background:#e2ebf5;border-radius:14px"></div>
<svg style="left:728px;top:229px;" width="52" height="46" viewBox="0 0 52 46"><rect x="3.500" y="3.500" width="34.500" height="38" rx="5.500" fill="#fff" stroke="#0e5fb0" stroke-width="3"/><path d="M14.500 30V13Q14.500 10.500 17 10.500H29.500Q27.500 10.500 27.500 13V30Z" fill="#e6eef7" stroke="#3d6480" stroke-width="1.200"/><path d="M29.500 10.500Q31.500 11 31.200 13.500V19.500" fill="none" stroke="#3d6480" stroke-width="1.200"/><path d="M10.500 30H22Q22 33.500 19.500 33.500H11.500Q9.200 33.500 10.500 30Z" fill="#e6eef7" stroke="#3d6480" stroke-width="1.200"/><text x="21.200" y="20.500" text-anchor="middle" font-size="5.500" font-family="Liberation Sans,sans-serif" fill="#3d6480">SQL</text><path d="M26.500 28.500L33.500 32.300L26.500 36.200Z" fill="#fff" stroke="#22b93c" stroke-width="1.500"/><circle cx="41.500" cy="3" r="8.300" fill="#e8142c"/><rect x="37" y="1.700" width="9" height="2.600" fill="#fff"/></svg>
<span class="t c" style="left:548px;width:400px;top:278.5px;transform:scaleX(0.9143);">Execute SQL script</span>
<div style="left:381px;top:678px;width:1534px;height:33px;background:#fff"></div>
<span class="t b" style="left:382.0px;top:685.0px;transform:scaleX(0.8948);font-size:16.5px;line-height:20px;">Execution Results</span>
<div style="left:382px;top:711px;width:1533px;height:23px;background:#fff"></div>
<div style="left:382px;top:711px;width:1533px;height:1px;background:#a9adb5"></div>
<div style="left:382px;top:716px;width:1px;height:363px;background:#bcc0c8"></div>
<svg style="left:382px;top:711px;" width="560" height="24" viewBox="0 0 560 24"><path d="M0.500 23V6Q0.500 0.500 6 0.500" fill="none" stroke="#a9adb5"/><rect x="-1" y="-1" width="6" height="6" fill="#fff"/><path d="M0.500 23V6Q0.500 0.500 6 0.500" fill="none" stroke="#a9adb5"/><g fill="none" stroke="#a9adb5"><path d="M126.500 22.500Q127 4 131.500 1"/><path d="M203 22.500Q203.500 4 208 1"/><path d="M300 22.500Q300.500 4 305 1"/><path d="M436.500 22.500Q437 4 441.500 1"/></g><path d="M503.500 23C504.500 8 505 1 512 0.500H560V23Z" fill="#f0f0f0" stroke="#a9adb5"/><g fill="none" stroke="#3d6480" stroke-width="1.500"><circle cx="12.500" cy="12" r="6.800"/><path d="M12.800 8V12.500H9.500" stroke-width="1.300"/></g><g fill="none" stroke="#3d6480" stroke-width="1.400"><rect x="133.500" y="5.500" width="11" height="14"/><path d="M135.500 5.500V3.800H142.500V5.500M136 10H142M136 13H142M136 16H142" stroke-width="1.100"/></g><g fill="none" stroke="#3d6480" stroke-width="1.500"><path d="M211.500 4.500H222.500M211.500 8.700H218M211.500 15.700H222.500M211.500 20H218"/></g><text x="204.800" y="10.300" font-size="7.500" font-weight="bold" font-family="Liberation Sans,sans-serif" fill="#3d6480">1</text><text x="204.800" y="21.300" font-size="7.500" font-weight="bold" font-family="Liberation Sans,sans-serif" fill="#3d6480">2</text><g fill="none" stroke="#3d6480" stroke-width="1.500"><path d="M303.300 3.500V20H318.500" stroke-width="1.700"/><path d="M306.500 15.500L310.500 10.500L313 13L317 8M313.800 7.500H317.300V11"/></g><g fill="none" stroke="#3d6480"><path d="M439.300 3.500V20H454.500" stroke-width="1.700"/><path d="M440 5.500H447M444 9.700H452M444 13.700H449M447 17H453.500" stroke-width="2.100"/></g><path d="M507.500 12Q516 3.500 524.500 12Q516 20.500 507.500 12Z" fill="#fff" stroke="#3d6480" stroke-width="1.400"/><ellipse cx="516" cy="12" rx="3.800" ry="4.300" fill="#3d6480"/></svg>
<div style="left:382px;top:733px;width:1533px;height:1px;background:#a9adb5"></div>
<div style="left:886px;top:733px;width:60px;height:1px;background:#f0f0f0"></div>
<span class="t" style="left:406.5px;top:715.5px;transform:scaleX(0.9668);">Execution History</span>
<span class="t" style="left:532.5px;top:715.5px;transform:scaleX(1.0155);">Logging</span>
<span class="t" style="left:607.8px;top:715.5px;transform:scaleX(0.9495);">Step Metrics</span>
<span class="t" style="left:704.5px;top:715.5px;transform:scaleX(0.9416);">Performance Graph</span>
<span class="t" style="left:841.0px;top:715.5px;transform:scaleX(0.9907);">Metrics</span>
<span class="t" style="left:910.5px;top:715.5px;transform:scaleX(0.9846);">Preview data</span>
<svg style="left:386.25px;top:739.7px;" width="15" height="15" viewBox="0 0 15 15"><circle cx="7.500" cy="7.500" r="6.3" fill="#fff" stroke="#333" stroke-width="1.100"/><circle cx="7.500" cy="7.500" r="3.600" fill="#333"/></svg>
<span class="t" style="left:403.9px;top:739.5px;transform:scaleX(0.9265);">First rows</span>
<svg style="left:464.25px;top:739.7px;" width="15" height="15" viewBox="0 0 15 15"><circle cx="7.500" cy="7.500" r="6.3" fill="#fff" stroke="#333" stroke-width="1.100"/></svg>
<span class="t" style="left:482.0px;top:739.5px;transform:scaleX(0.9166);">Last rows</span>
<svg style="left:541.1px;top:739.7px;" width="15" height="15" viewBox="0 0 15 15"><circle cx="7.500" cy="7.500" r="6.3" fill="#fff" stroke="#333" stroke-width="1.100"/></svg>
<span class="t" style="left:558.9px;top:739.5px;transform:scaleX(1.0462);">Off</span>
<div style="left:385px;top:772.5px;width:1530px;height:307px;background:#fff"></div>
<div style="left:385px;top:800px;width:25.5px;height:279px;background:#f7f7f7"></div>
<div style="left:410.5px;top:773px;width:1.2px;height:306px;background:#e4ebf3"></div>
<div style="left:451px;top:773px;width:1.2px;height:306px;background:#e4ebf3"></div>
<div style="left:491.8px;top:773px;width:1.2px;height:306px;background:#e4ebf3"></div>
<div style="left:531px;top:773px;width:1.2px;height:306px;background:#e4ebf3"></div>
<div style="left:385px;top:820.6px;width:1530px;height:1.2px;background:#ededed"></div>
<div style="left:385px;top:842.08px;width:1530px;height:1.2px;background:#ededed"></div>
<div style="left:385px;top:863.56px;width:1530px;height:1.2px;background:#ededed"></div>
<div style="left:385px;top:885.04px;width:1530px;height:1.2px;background:#ededed"></div>
<div style="left:385px;top:906.52px;width:1530px;height:1.2px;background:#ededed"></div>
<div style="left:385px;top:928.0px;width:1530px;height:1.2px;background:#ededed"></div>
<div style="left:385px;top:949.48px;width:1530px;height:1.2px;background:#ededed"></div>
<div style="left:385px;top:970.96px;width:1530px;height:1.2px;background:#ededed"></div>
<div style="left:385px;top:992.44px;width:1530px;height:1.2px;background:#ededed"></div>
<div style="left:385px;top:1013.92px;width:1530px;height:1.2px;background:#ededed"></div>
<div style="left:385px;top:1035.4px;width:1530px;height:1.2px;background:#ededed"></div>
<div style="left:385px;top:1056.88px;width:1530px;height:1.2px;background:#ededed"></div>
<svg style="left:393px;top:772px;" width="10" height="7" viewBox="0 0 10 7"><path d="M1 5.500L5 1.500L9 5.500" fill="none" stroke="#555" stroke-width="1"/></svg>
<span class="t" style="left:391.0px;top:778.5px;transform:scaleX(0.94);">#</span>
<span class="t" style="left:416.5px;top:778.5px;transform:scaleX(0.94);">A</span>
<span class="t" style="left:457.5px;top:778.5px;transform:scaleX(0.94);">B</span>
<span class="t" style="left:497.5px;top:778.5px;transform:scaleX(0.94);">C</span>
<span class="t" style="left:391.5px;top:803.5px;transform:scaleX(0.94);">1</span>
<span class="t" style="left:416.5px;top:803.5px;transform:scaleX(0.94);">Q</span>
<span class="t" style="left:457.5px;top:803.5px;transform:scaleX(0.94);">T</span>
<span class="t" style="left:497.5px;top:803.5px;transform:scaleX(0.94);">S</span>
<span class="t" style="left:391.5px;top:824.5px;transform:scaleX(0.94);">2</span>
<span class="t" style="left:416.5px;top:824.5px;transform:scaleX(0.94);">S</span>
<span class="t" style="left:457.5px;top:824.5px;transform:scaleX(0.94);">Q</span>
<span class="t" style="left:497.5px;top:824.5px;transform:scaleX(0.94);">F</span>
<div style="left:932px;top:171px;width:788px;height:656.3px;background:#fff;border:1.2px solid #6e6e6e;box-sizing:border-box;box-shadow:0 3px 20px 2px rgba(0,0,0,.27)"></div>
<svg style="left:942px;top:181px;" width="17" height="17" viewBox="0 0 17 17"><path d="M4.500 12V3.500Q4.500 2 6 2H13Q11.800 2 11.800 3.500V12Z" fill="#dfe7ef" stroke="#9fb3c5" stroke-width="1"/><path d="M2 12H9.500Q9.500 14.300 8 14.300H3Q1.500 14.300 2 12Z" fill="#dfe7ef" stroke="#9fb3c5"/><path d="M13 2Q14.300 2.300 14 4V7" stroke="#9fb3c5" fill="none"/><path d="M10.500 11.500L14.800 13.800L10.500 16Z" fill="#fff" stroke="#4dc560" stroke-width="1.100"/></svg>
<span class="t" style="left:962.5px;top:181.5px;transform:scaleX(0.8852);font-size:13.5px;line-height:16px;">Execute SQL statements</span>
<svg style="left:1590px;top:178px;" width="115" height="20" viewBox="0 0 115 20"><g fill="none" stroke="#1a1a1a" stroke-width="1.250"><path d="M5 10.500H15.500"/><rect x="52.500" y="5" width="10" height="10.300"/><path d="M100 4.500L110.500 15.200M110.500 4.500L100 15.200"/></g></svg>
<span class="t r" style="right:712.5px;top:217.5px;transform:scaleX(0.9447);">Step name</span>
<div style="left:1208.7px;top:216.4px;width:505.3px;height:23.6px;background:#fff;border:1px solid #7a7a7a;box-sizing:border-box"></div>
<span class="t" style="left:1214.0px;top:220.5px;transform:scaleX(0.9161);">Execute SQL script</span>
<span class="t r" style="right:712.5px;top:245.5px;transform:scaleX(0.9881);">Connection</span>
<div style="left:1208px;top:244.8px;width:344.8px;height:23.8px;background:#fff;border:1.4px solid #b4b8c0;box-sizing:border-box"></div>
<div style="left:1534px;top:247px;width:16px;height:19px;background:#f1f1f1"></div>
<svg style="left:1536px;top:251px;" width="12" height="10" viewBox="0 0 12 10"><path d="M2.300 3.200L5.700 8L9.100 3.200" fill="none" stroke="#484848" stroke-width="2"/></svg>
<span class="t" style="left:1212.75px;top:247.5px;transform:scaleX(0.8449);">DW_PRE</span>
<div style="left:1557.5px;top:245.5px;width:40px;height:26px;background:#e1e1e1;border:1px solid #adadad;box-sizing:border-box"></div>
<span class="t c" style="left:1377.75px;width:400px;top:251.5px;transform:scaleX(0.9173);">Edit...</span>
<div style="left:1604px;top:245.5px;width:45px;height:26px;background:#e1e1e1;border:1px solid #adadad;box-sizing:border-box"></div>
<span class="t c" style="left:1427.4px;width:400px;top:251.5px;transform:scaleX(0.955);">New...</span>
<div style="left:1655.7px;top:245.5px;width:57.3px;height:26px;background:#e1e1e1;border:1px solid #adadad;box-sizing:border-box"></div>
<span class="t c" style="left:1484.9px;width:400px;top:251.5px;transform:scaleX(0.9309);">Wizard...</span>
<span class="t" style="left:938.0px;top:278.5px;transform:scaleX(0.9409);">SQL script to execute. (statements separated by ; ) Question marks will be replaced by arguments.</span>
<div style="left:938px;top:298.7px;width:767.8px;height:177.6px;background:#fff;border:1px solid #abadb3;box-sizing:border-box"></div>
<div style="left:1687px;top:301.2px;width:17.2px;height:155px;background:#f0f0f0"></div>
<div style="left:940.6px;top:455.9px;width:763.6px;height:17.8px;background:#f0f0f0"></div>
<svg style="left:1689px;top:306px;" width="12" height="10" viewBox="0 0 12 10"><path d="M2.2 8L5.6 3.6L9 8" fill="none" stroke="#bcbcbc" stroke-width="2"/></svg>
<svg style="left:1689px;top:440px;" width="12" height="10" viewBox="0 0 12 10"><path d="M2.2 2.6L5.600 7L9 2.6" fill="none" stroke="#bcbcbc" stroke-width="2"/></svg>
<svg style="left:944.3px;top:459.6px;" width="10" height="12" viewBox="0 0 10 12"><path d="M7 1.700L3 5.400L7 9.100" fill="none" stroke="#bcbcbc" stroke-width="2"/></svg>
<svg style="left:1672px;top:459.6px;" width="10" height="12" viewBox="0 0 10 12"><path d="M3.400 1.300L7.400 5L3.400 8.700" fill="none" stroke="#bcbcbc" stroke-width="2"/></svg>
<svg style="left:1705px;top:298px;" width="14" height="16" viewBox="0 0 14 16"><path d="M6.800 0.800L13.200 8L6.800 15.200L0.400 8Z" fill="#3d6480"/><text x="6.800" y="11.300" text-anchor="middle" font-size="8.500" font-weight="bold" font-family="Liberation Sans,sans-serif" fill="#fff">$</text></svg>
<div style="left:982px;top:316.2px;width:58.1px;height:14.6px;background:#0078d7"></div>
<div style="left:982px;top:316.2px;width:1px;height:14.6px;background:#e08a3c"></div>
<span class="t" style="left:940.7px;top:303px;font-family:'Liberation Mono',monospace;font-size:13.85px;transform:none;line-height:15px;"><span style="position:static;display:inline;color:#1414ff">select</span> A,</span>
<span class="t" style="left:940.7px;top:317.5px;font-family:'Liberation Mono',monospace;font-size:13.85px;transform:none;line-height:15px;"><span style="position:static;display:inline;color:#1414ff">from</span> <span style="position:static;display:inline;color:#fff">???????</span></span>
<span class="t" style="left:937.75px;top:481.5px;transform:scaleX(0.9533);">Line 2 Column 5</span>
<div style="left:1133.2px;top:508.1px;width:14px;height:14px;background:#fff;border:1px solid #333;box-sizing:border-box"></div>
<span class="t r" style="right:788.25px;top:508.5px;transform:scaleX(0.9315);">Execute for each row?</span>
<div style="left:1133.2px;top:530.7px;width:14px;height:14px;background:#fff;border:1px solid #333;box-sizing:border-box"></div>
<span class="t r" style="right:785.25px;top:531.5px;transform:scaleX(0.9283);">Execute as a single statement</span>
<div style="left:1133.2px;top:553.3px;width:14px;height:14px;background:#fff;border:1px solid #333;box-sizing:border-box"></div>
<span class="t r" style="right:785.5px;top:553.5px;transform:scaleX(0.9646);">Variable substitution</span>
<div style="left:1133.2px;top:575.9px;width:14px;height:14px;background:#fff;border:1px solid #c6c6c6;box-sizing:border-box"></div>
<span class="t g r" style="right:785.0px;top:576.5px;transform:scaleX(0.9306);">Bind parameters?</span>
<div style="left:1133.2px;top:598.5px;width:14px;height:14px;background:#fff;border:1px solid #333;box-sizing:border-box"></div>
<span class="t r" style="right:785.25px;top:599.5px;transform:scaleX(0.9341);">Quote Strings?</span>
<span class="t g" style="left:937.75px;top:625.5px;transform:scaleX(0.9171);">Parameters :</span>
<div style="left:938px;top:646px;width:270.5px;height:132.5px;background:#fff;border:1px solid #7d8491;box-sizing:border-box"></div>
<div style="left:939.5px;top:675.5px;width:26px;height:101.5px;background:#f8f8f8"></div>
<div style="left:965.8px;top:648px;width:1.2px;height:129px;background:#e4ebf3"></div>
<div style="left:1189.3px;top:648px;width:1.2px;height:129px;background:#e4ebf3"></div>
<div style="left:940px;top:696.3px;width:266px;height:1.2px;background:#ebebeb"></div>
<div style="left:940px;top:717.8px;width:266px;height:1.2px;background:#ebebeb"></div>
<div style="left:940px;top:739.3px;width:266px;height:1.2px;background:#ebebeb"></div>
<div style="left:940px;top:760.8px;width:266px;height:1.2px;background:#ebebeb"></div>
<svg style="left:947px;top:647.5px;" width="10" height="7" viewBox="0 0 10 7"><path d="M1 5.500L5 1.500L9 5.500" fill="none" stroke="#555" stroke-width="1"/></svg>
<span class="t" style="left:945.0px;top:654.5px;transform:scaleX(0.94);">#</span>
<span class="t" style="left:972.0px;top:654.5px;transform:scaleX(0.9437);">Field name to be used as argument</span>
<span class="t" style="left:945.5px;top:678.5px;transform:scaleX(0.94);">1</span>
<span class="t" style="left:972.0px;top:678.5px;transform:scaleX(0.94);">A</span>
<span class="t" style="left:945.5px;top:700.5px;transform:scaleX(0.94);">2</span>
<span class="t" style="left:972.0px;top:700.5px;transform:scaleX(0.94);">B</span>
<span class="t" style="left:945.5px;top:721.5px;transform:scaleX(0.94);">3</span>
<span class="t" style="left:972.0px;top:721.5px;transform:scaleX(0.94);">C</span>
<span class="t r" style="right:438.75px;top:677.5px;transform:scaleX(0.949);">Field to contain insert stats</span>
<div style="left:1480.5px;top:670.0px;width:233.3px;height:23.7px;background:#fff;border:1px solid #7a7a7a;box-sizing:border-box"></div>
<span class="t r" style="right:438.75px;top:705.5px;transform:scaleX(0.9483);">Field to contain Update stats</span>
<div style="left:1480.5px;top:698.33px;width:233.3px;height:23.7px;background:#fff;border:1px solid #7a7a7a;box-sizing:border-box"></div>
<span class="t r" style="right:438.75px;top:734.5px;transform:scaleX(0.9428);">Field to contain Delete stats</span>
<div style="left:1480.5px;top:726.66px;width:233.3px;height:23.7px;background:#fff;border:1px solid #7a7a7a;box-sizing:border-box"></div>
<span class="t r" style="right:438.75px;top:762.5px;transform:scaleX(0.9339);">Field to contain Read stats</span>
<div style="left:1480.5px;top:754.99px;width:233.3px;height:23.7px;background:#fff;border:1px solid #7a7a7a;box-sizing:border-box"></div>
<div style="left:939px;top:792px;width:61.7px;height:27.2px;background:#e1e1e1;border:1px solid #adadad;box-sizing:border-box"></div>
<svg style="left:946px;top:797px;" width="18" height="18" viewBox="0 0 18 18"><circle cx="9.5" cy="9.3" r="7.8" fill="#fff" stroke="#3d6480" stroke-width="1.6"/><text x="9.5" y="13.4" text-anchor="middle" font-size="11.5" font-family="Liberation Sans,sans-serif" fill="#3d6480">?</text></svg>
<span class="t" style="left:967.75px;top:798.5px;transform:scaleX(1.0);">Help</span>
<div style="left:1184.5px;top:793px;width:89px;height:26.3px;background:#e1e1e1;border:1px solid #adadad;box-sizing:border-box"></div>
<span class="t c" style="left:1029.1px;width:400px;top:798.5px;transform:scaleX(0.9443);">OK</span>
<div style="left:1280px;top:793px;width:89.5px;height:26.3px;background:#e1e1e1;border:1px solid #adadad;box-sizing:border-box"></div>
<span class="t c" style="left:1124.6px;width:400px;top:798.5px;transform:scaleX(0.9328);">Cancel</span>
<div style="left:1376.3px;top:793px;width:89px;height:26.3px;background:#e1e1e1;border:1px solid #adadad;box-sizing:border-box"></div>
<span class="t c" style="left:1220.4px;width:400px;top:798.5px;transform:scaleX(0.9422);">Get fields</span>
</body></html>
